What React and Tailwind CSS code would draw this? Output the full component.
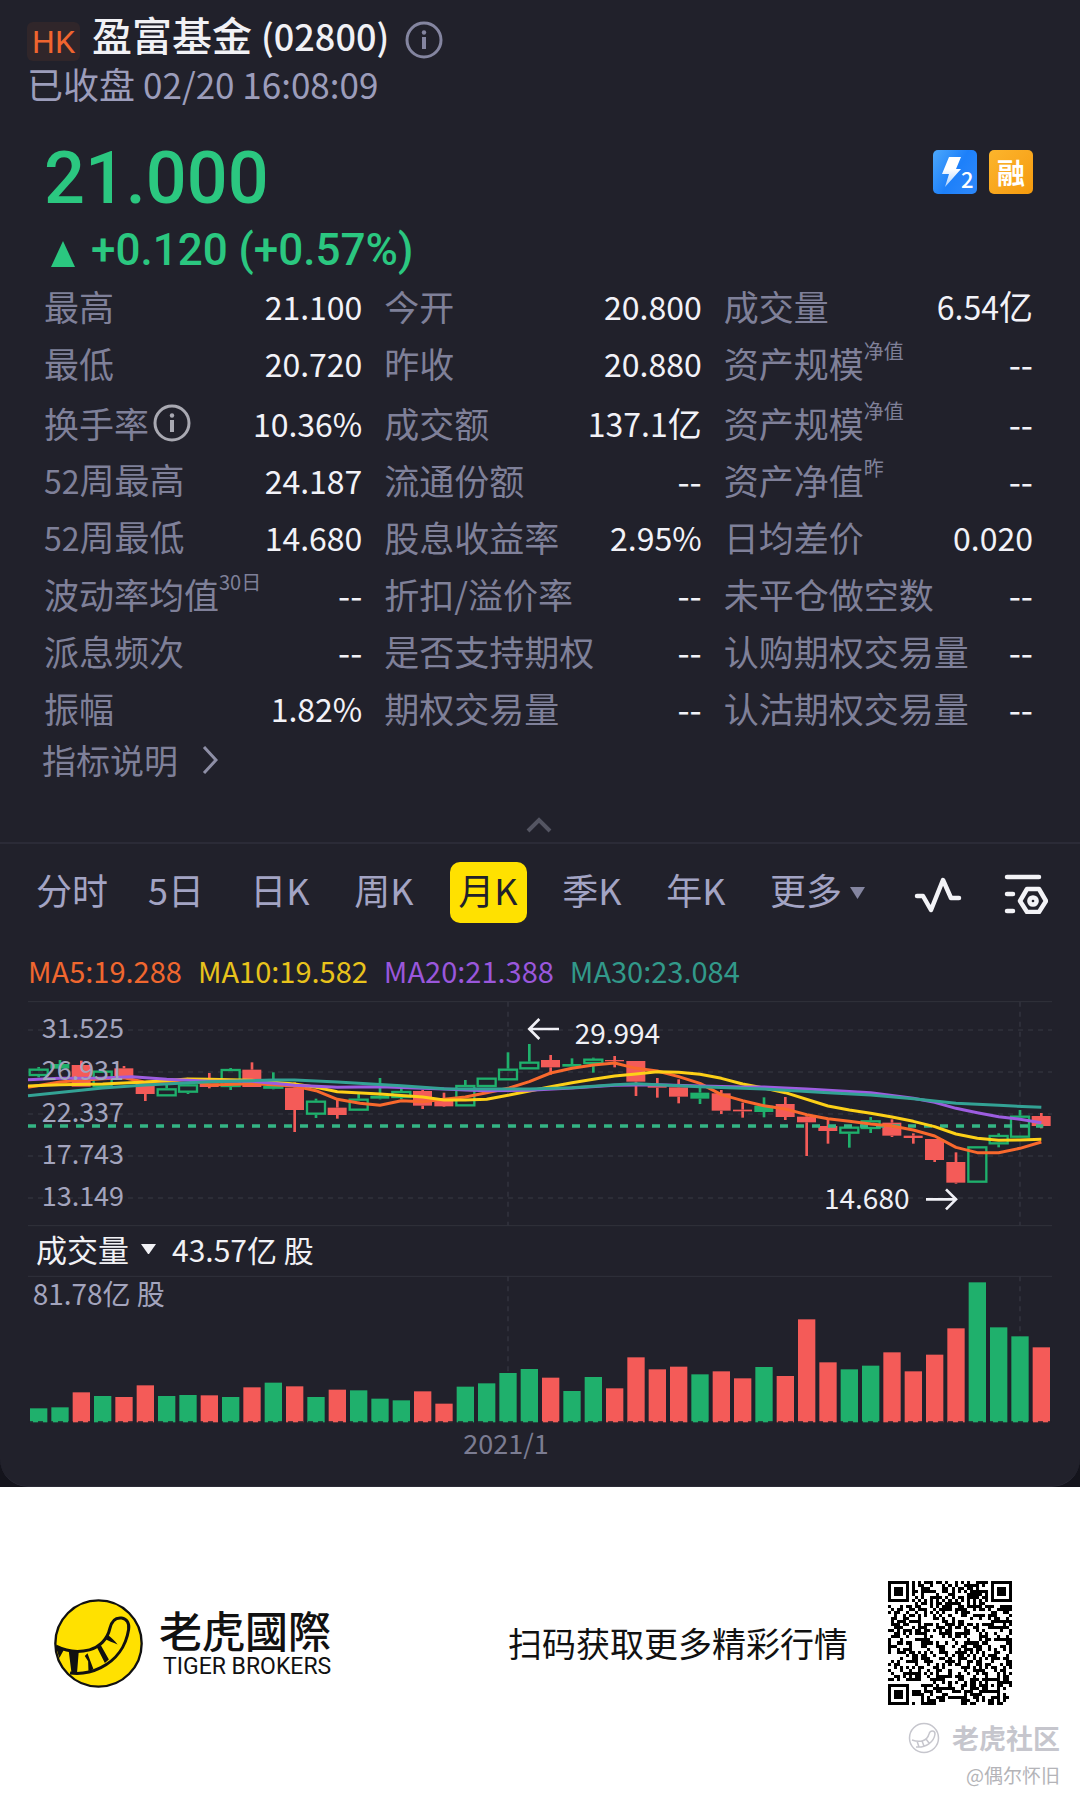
import React from "react";

const SANS = "font-['Noto_Sans_CJK_SC','Noto_Sans',sans-serif]";

const UP = "#1fb06c";
const DOWN = "#f45b58";
const PANEL = "#21212b";

const STATS = [
  [["最高", "21.100"], ["今开", "20.800"], ["成交量", "6.54", { unit: "亿" }]],
  [["最低", "20.720"], ["昨收", "20.880"], ["资产规模", "--", { sup: "净值" }]],
  [["换手率", "10.36%", { info: true }], ["成交额", "137.1", { unit: "亿" }], ["资产规模", "--", { sup: "净值" }]],
  [["52周最高", "24.187"], ["流通份额", "--"], ["资产净值", "--", { sup: "昨" }]],
  [["52周最低", "14.680"], ["股息收益率", "2.95%"], ["日均差价", "0.020"]],
  [["波动率均值", "--", { sup: "30日" }], ["折扣/溢价率", "--"], ["未平仓做空数", "--"]],
  [["派息频次", "--"], ["是否支持期权", "--"], ["认购期权交易量", "--"]],
  [["振幅", "1.82%"], ["期权交易量", "--"], ["认沽期权交易量", "--"]],
];

const TABS = ["分时", "5日", "日K", "周K", "月K", "季K", "年K"];

// Each candle: kind (h = hollow rise, f = filled rise, d = fall), body top, body bottom, wick top, wick bottom
const CANDLES = [
  ["h", 236, 258, 231, 262], ["f", 222, 236, 210, 240], ["d", 225, 290, 212, 290], ["h", 242, 292, 240, 292],
  ["d", 235, 258, 228, 258], ["d", 275, 312, 275, 333], ["h", 295, 319, 285, 319], ["h", 283, 308, 280, 312],
  ["d", 280, 291, 249, 295], ["h", 237, 291, 234, 300], ["d", 239, 291, 217, 291], ["h", 288, 296, 247, 298],
  ["d", 293, 360, 277, 426], ["h", 332, 374, 326, 384], ["d", 353, 375, 330, 386], ["h", 326, 362, 312, 362],
  ["f", 317, 326, 264, 328], ["h", 303, 324, 296, 327], ["d", 303, 347, 300, 357], ["d", 330, 349, 308, 351],
  ["h", 285, 349, 270, 349], ["h", 263, 291, 263, 291], ["h", 236, 271, 187, 271], ["h", 215, 238, 162, 238],
  ["d", 210, 232, 195, 254], ["f", 222, 230, 205, 230], ["h", 206, 222, 203, 248], ["d", 210, 214, 198, 232],
  ["d", 213, 275, 213, 318], ["d", 288, 293, 264, 323], ["d", 292, 320, 268, 340], ["f", 308, 326, 280, 342],
  ["d", 310, 362, 300, 372], ["d", 359, 364, 338, 383], ["f", 347, 366, 322, 382], ["d", 342, 381, 321, 390],
  ["d", 380, 397, 375, 498], ["d", 408, 423, 385, 461], ["h", 410, 431, 410, 473], ["h", 391, 417, 381, 429],
  ["d", 398, 437, 388, 441], ["d", 437, 444, 430, 461], ["d", 447, 510, 447, 516], ["d", 516, 578, 487, 581],
  ["h", 469, 578, 469, 578], ["h", 435, 463, 430, 472], ["h", 377, 443, 360, 443], ["d", 378, 408, 369, 415],
];

const AVERAGES = [
  ["#f9692d", "84,292 180,276 244,271 308,266 372,263 436,277 500,275 564,268 628,285 756,281 884,288 948,302 1012,328 1080,340 1140,346 1204,332 1268,335 1332,328 1396,321 1460,308 1524,295 1588,275 1652,249 1716,235 1780,225 1844,219 1908,235 1972,243 2036,260 2100,280 2164,314 2228,332 2292,347 2356,357 2420,374 2484,386 2548,394 2612,402 2676,408 2740,420 2804,438 2868,472 2932,488 2996,488 3060,475 3124,456"],
  ["#fdd018", "84,288 180,284 308,282 436,276 564,267 628,268 756,271 884,282 948,292 1012,305 1140,312 1268,321 1332,330 1396,330 1460,328 1524,316 1588,303 1652,290 1716,278 1780,268 1844,258 1908,252 1972,245 2036,247 2100,253 2164,265 2228,282 2292,294 2356,308 2484,348 2548,360 2612,370 2676,381 2740,394 2804,410 2868,432 2932,445 2996,451 3060,450 3124,448"],
  ["#9d5de0", "84,269 180,265 308,264 396,260 500,268 628,274 756,274 884,286 1012,292 1140,290 1332,297 1396,300 1460,302 1588,301 1716,294 1844,286 1972,284 2100,288 2228,291 2292,291 2420,297 2612,308 2740,325 2804,337 2868,355 2932,368 2996,380 3060,388 3124,398"],
  ["#33a295", "84,317 308,294 436,285 628,275 756,272 820,270 884,270 1012,276 1204,287 1332,296 1460,297 1588,297 1716,293 1844,284 1908,281 2100,290 2292,297 2484,308 2612,315 2740,326 2868,340 2996,346 3124,352"],
];

const VOLUMES = [
  [414, 1], [411, 1], [366, 0], [377, 1], [380, 0], [345, 0], [377, 1], [374, 1], [375, 0], [380, 1], [351, 0], [337, 1],
  [348, 0], [380, 1], [358, 0], [360, 1], [385, 1], [390, 1], [363, 0], [400, 0], [349, 1], [339, 1], [308, 1], [296, 1],
  [322, 0], [362, 1], [320, 1], [354, 0], [261, 0], [297, 0], [289, 0], [312, 1], [303, 0], [324, 0], [290, 1], [317, 0],
  [147, 0], [276, 0], [297, 1], [286, 1], [246, 0], [303, 0], [253, 0], [174, 0], [36, 1], [171, 1], [198, 1], [231, 0],
];

const GRID = [[120, "31.525"], [246, "26.931"], [372, "22.337"], [498, "17.743"], [624, "13.149"]];

function InfoIcon({ className }) {
  return (
    <svg viewBox="0 0 38 38" className={className} fill="none" stroke="currentColor" aria-hidden="true">
      <circle cx="19" cy="19" r="17" strokeWidth="3" />
      <circle cx="19" cy="11.5" r="2.2" fill="currentColor" stroke="none" />
      <path d="M19 16v12" strokeWidth="4" />
    </svg>
  );
}

function Stat({ label, value, sup, info, unit }) {
  return (
    <div className="flex items-center justify-between">
      <dt className="flex items-center text-[35px] leading-[48px] whitespace-nowrap text-[#7f8099]">
        <span className="whitespace-nowrap">
          {label.startsWith("52") ? <><span className="text-[32px]">52</span>{label.slice(2)}</> : label}
        </span>
        {sup && <sup className="top-0 -mt-6 text-[20px] leading-none">{sup}</sup>}
        {info && (
          <button type="button" aria-label="换手率说明" className="ml-1 text-[#a9a9b2]">
            <InfoIcon className="size-[38px]" />
          </button>
        )}
      </dt>
      <dd className={`leading-[48px] whitespace-nowrap text-[#f2f2f8] ${value === "--" ? "text-[35px]" : "text-[32px]"}`}>
        {value}
        {unit && <span className="text-[34px]">{unit}</span>}
      </dd>
    </div>
  );
}

function PriceChart() {
  return (
    <svg viewBox="84 33 3072 675" className="block h-auto w-full overflow-visible" role="img" aria-label="月K线图">
      <g stroke="#31323c" strokeWidth="3" fill="none">
        <path d="M84 35H3156M84 707H3156" />
        <g strokeDasharray="15 15" strokeWidth="5">
          {GRID.map(([y]) => <path key={y} d={`M84 ${y}H3156`} />)}
          <path d="M1524 35V707M3060 35V707" />
        </g>
      </g>
      {CANDLES.map(([kind, top, bottom, high, low], i) => {
        const x = 116 + i * 64;
        const color = kind === "d" ? DOWN : UP;
        return (
          <g key={i} stroke={color} strokeWidth="8">
            {high < top && <path d={`M${x} ${high}V${top}`} />}
            {low > bottom && <path d={`M${x} ${bottom}V${low}`} />}
            {kind === "h" ? (
              <rect x={x - 27} y={top + 3} width="54" height={Math.max(bottom - top - 6, 1)} fill="none" strokeWidth="7" />
            ) : (
              <rect x={x - 29} y={top} width="57" height={bottom - top} fill={color} stroke="none" />
            )}
          </g>
        );
      })}
      <path d="M84 408H3130" stroke="#35b585" strokeWidth="10" strokeDasharray="24 24" />
      {AVERAGES.map(([color, points]) => (
        <polyline key={color} points={points} fill="none" stroke={color} strokeWidth="9" strokeLinejoin="round" />
      ))}
      <g fill="#a3a4bd" fontSize="81">
        {GRID.map(([y, text]) => <text key={text} x="125" y={y + 24}>{text}</text>)}
      </g>
      <g fill="#f0f0f6" fontSize="84">
        <text x="1724" y="161">29.994</text>
        <text x="2472" y="657">14.680</text>
      </g>
      <path
        d="M1677 117H1590M1618 87L1588 117L1618 147M2778 628H2866M2838 598L2868 628L2838 658"
        stroke="#f0f0f6" strokeWidth="8" fill="none"
      />
    </svg>
  );
}

function VolumeChart() {
  return (
    <svg viewBox="84 17 3072 552" className="block h-auto w-full overflow-visible" role="img" aria-label="成交量柱状图">
      <g stroke="#31323c" fill="none">
        <path d="M84 18H3156" strokeWidth="3" />
        <path d="M1524 18V455M3060 18V455" strokeDasharray="15 15" strokeWidth="5" />
      </g>
      {VOLUMES.map(([top, up], i) => (
        <rect key={i} x={90 + i * 64} y={top} width="52" height={456 - top} fill={up ? UP : DOWN} />
      ))}
      <path d="M84 455H3156" stroke={PANEL} strokeWidth="5" strokeDasharray="15 15" />
      <text x="98" y="104" fontSize="84" fill="#a3a4bd">81.78亿 股</text>
      <text x="1518" y="552" fontSize="81" fill="#7b7c92" textAnchor="middle">2021/1</text>
    </svg>
  );
}

function TigerLogo({ className }) {
  return (
    <svg viewBox="44 58 266 266" className={className} aria-hidden="true">
      <circle cx="177" cy="191" r="129" fill="#ffe100" stroke="#111" strokeWidth="7" />
      <path
        d="M50 199C80 214 118 218 150 210C180 202 204 178 211 146C216 124 229 113 246 115C262 117 270 131 267 149C259 200 229 241 184 263C154 278 122 283 92 279"
        fill="none" stroke="#111" strokeWidth="9"
      />
      <path
        d="M48 196L74 209L60 234ZM88 213L118 214L113 277L96 277ZM136 228L144 220L162 268L147 273L146 244ZM173 204L184 196L208 239L196 249ZM195 177L203 164C215 173 226 182 234 194C220 188 207 184 195 177Z"
        fill="#111"
      />
    </svg>
  );
}

const QR_SIZE = 41;

function buildQr() {
  let seed = 28000;
  const random = () => {
    seed = (seed * 1103515245 + 12345) % 2147483648;
    return seed / 2147483648;
  };
  const finder = (x, y) => {
    const d = Math.max(Math.abs(x - 3), Math.abs(y - 3));
    return d <= 4 ? d !== 2 && d !== 4 : null;
  };
  let path = "";
  for (let y = 0; y < QR_SIZE; y++) {
    for (let x = 0; x < QR_SIZE; x++) {
      let on = random() > 0.5;
      if (x === 6 || y === 6) on = (x + y) % 2 === 0;
      const a = Math.max(Math.abs(x - 34), Math.abs(y - 34));
      if (a <= 2) on = a !== 1;
      const f = finder(x, y) ?? finder(x - QR_SIZE + 7, y) ?? finder(x, y - QR_SIZE + 7);
      if (f !== null) on = f;
      if (on) path += `M${x} ${y}h1v1h-1z`;
    }
  }
  return path;
}

const QR_PATH = buildQr();

export default function App() {
  return (
    <div className={`w-full bg-white ${SANS}`}>
      <div className="bg-[#14141c]">
        <main className="rounded-b-[28px] border-b border-[#2b2b36] bg-[#21212b] pb-[26px]">
          <header className="pt-3 pl-[27px]">
            <div className="flex h-12 items-start">
              <span className="mt-[10px] flex h-[39px] w-[53px] items-center justify-center rounded-md bg-[#30262a] font-[Roboto,sans-serif] text-[32px] leading-none text-[#f0652f]">HK</span>
              <h1 className="ml-3 text-[40px] leading-[44px] font-medium whitespace-nowrap text-[#f1f1f5]">
                盈富基金 <span className="text-[36px]">(02800)</span>
              </h1>
              <button type="button" aria-label="标的信息" className="mt-[9px] ml-4 text-[#8485a0]">
                <InfoIcon className="size-[38px]" />
              </button>
            </div>
            <p className="text-[36px] leading-[46px] text-[#9c9dbb]">
              已收盘 <span className="text-[35px]">02/20 16:08:09</span>
            </p>
          </header>

          <section className="mt-7 pr-[47px] pl-11">
            <div className="flex items-start justify-between">
              <p className="font-[Roboto,sans-serif] text-[72px] leading-[88px] font-medium text-[#2bc780]">21.000</p>
              <div className="mt-[15px] flex gap-3">
                <svg viewBox="0 0 44 44" className="size-11" role="img" aria-label="Level 2">
                  <defs>
                    <linearGradient id="lv2" x1="0" y1="0" x2="1" y2="0.6">
                      <stop offset="0" stopColor="#4da8fb" />
                      <stop offset="0.6" stopColor="#1d80fa" />
                      <stop offset="1" stopColor="#2a86fa" />
                    </linearGradient>
                    <linearGradient id="bolt" x1="0" y1="0" x2="0" y2="1">
                      <stop offset="0.4" stopColor="#fff" />
                      <stop offset="1" stopColor="#a9cffd" />
                    </linearGradient>
                  </defs>
                  <rect width="44" height="44" rx="5" fill="url(#lv2)" />
                  <path d="M16 7h12l-5 12h5L12 37l4-13H9z" fill="url(#bolt)" />
                  <text x="28" y="38" fontSize="22" fontWeight="500" fill="#fff">2</text>
                </svg>
                <span className="flex size-11 items-center justify-center rounded-[5px] bg-linear-to-br from-[#fcb52c] to-[#f59a0b] text-[28px] leading-none font-bold text-white">融</span>
              </div>
            </div>
            <p className="flex h-[54px] items-center font-[Roboto,sans-serif] text-[44px] leading-[52px] font-medium text-[#2bc780]">
              <svg viewBox="0 0 24 26" className="mt-2 mr-4 ml-[7px] h-[26px] w-6" aria-hidden="true">
                <path d="M12 0L24 26H0z" fill="currentColor" />
              </svg>
              +0.120 (+0.57%)
            </p>

            <dl>
              {STATS.map((row, i) => (
                <div
                  key={i}
                  className={`grid grid-cols-[318fr_317fr_309fr] gap-[22px] ${i === 2 ? "h-[60px] pt-1" : "h-[57px]"}`}
                >
                  {row.map(([label, value, extra], j) => (
                    <Stat key={j} label={label} value={value} {...extra} />
                  ))}
                </div>
              ))}
            </dl>
            <button type="button" className="-ml-0.5 flex h-12 items-center gap-6 text-[34px] leading-[48px] text-[#7f8099]">
              指标说明
              <svg viewBox="0 0 16 28" className="h-7 w-4" fill="none" stroke="#8e8fa6" strokeWidth="3" aria-hidden="true">
                <path d="M2 1l12 13L2 27" />
              </svg>
            </button>
            <div className="flex justify-center pt-8 pb-2">
              <button type="button" aria-label="收起">
                <svg viewBox="0 0 26 18" className="h-[18px] w-[26px]" fill="none" stroke="#545562" strokeWidth="4" aria-hidden="true">
                  <path d="M2 15L13 4l11 11" />
                </svg>
              </button>
            </div>
          </section>

          <nav className="flex h-[98px] items-center border-t-2 border-[#2b2b37] pr-8 pl-5 text-[36px] leading-[54px] text-[#a3a4c4]">
            {TABS.map((tab) => (
              <div key={tab} className="flex w-[104px] justify-center">
                <button
                  type="button"
                  className={
                    tab === "月K"
                      ? "h-[61px] w-[77px] rounded-[10px] bg-[#ffe100] pb-[7px] whitespace-nowrap text-[#21212b]"
                      : "h-[61px] pb-[7px] whitespace-nowrap"
                  }
                >
                  {tab}
                </button>
              </div>
            ))}
            <button type="button" className="ml-[22px] flex h-[61px] items-center gap-2 pb-[7px] whitespace-nowrap">
              更多
              <svg viewBox="0 0 15 12" className="mt-2 h-3 w-[15px]" aria-hidden="true">
                <path d="M0 0h15L7.500 12z" fill="#8485a0" />
              </svg>
            </button>
            <div className="mt-1 ml-auto flex items-center gap-[42px] text-[#f3f3f7]">
              <button type="button" aria-label="画线">
                <svg viewBox="0 0 48 40" className="h-10 w-12" fill="none" stroke="currentColor" strokeWidth="4.500" strokeLinecap="round" strokeLinejoin="round" aria-hidden="true">
                  <path d="M3 22h6l8 14L29 6l8 18h8" />
                </svg>
              </button>
              <button type="button" aria-label="图表设置">
                <svg viewBox="0 0 44 40" className="h-10 w-11" fill="none" stroke="currentColor" strokeWidth="4.500" strokeLinecap="round" strokeLinejoin="round" aria-hidden="true">
                  <path d="M3 3h32M3 20h6M3 37h6" />
                  <path d="M23 15h12l7 12-7 11H23l-7-11z" />
                  <circle cx="29" cy="27" r="3.600" />
                </svg>
              </button>
            </div>
          </nav>

          <section className="px-7">
            <div className="flex gap-4 pt-2 pb-[9px] text-[29px] leading-[44px]">
              <span className="text-[#f0672f]">MA5:19.288</span>
              <span className="text-[#e8c31c]">MA10:19.582</span>
              <span className="text-[#9a57dc]">MA20:21.388</span>
              <span className="text-[#32998a]">MA30:23.084</span>
            </div>
            <PriceChart />
            <div className="flex h-[50px] items-center pb-1 pl-2 leading-[46px] text-[#f1f1f5]">
              <button type="button" className="flex items-center gap-3 text-[31px]">
                成交量
                <svg viewBox="0 0 15 10" className="h-2.5 w-[15px]" aria-hidden="true">
                  <path d="M0 0h15L8 10H7z" fill="currentColor" />
                </svg>
              </button>
              <span className="ml-4 text-[30px]">43.57亿 股</span>
            </div>
            <VolumeChart />
          </section>
        </main>
      </div>

      <footer className="pt-[94px] pr-5 pl-[54px] text-[#111]">
        <div className="flex items-center pr-12">
          <TigerLogo className="size-[89px]" />
          <div className="ml-4">
            <p className="font-['Noto_Sans_CJK_TC',sans-serif] text-[43px] leading-[46px] font-medium">老虎國際</p>
            <p className="pt-0.5 pl-1 font-[Roboto,sans-serif] text-[23px] leading-[26px]">TIGER BROKERS</p>
          </div>
          <p className="mr-10 ml-auto text-[34px] leading-[48px]">扫码获取更多精彩行情</p>
          <svg viewBox="0 0 41 41" className="size-[124px]" role="img" aria-label="二维码" shapeRendering="crispEdges">
            <path d={QR_PATH} fill="#000" />
          </svg>
        </div>
        <div className="mt-3 flex flex-col items-end">
          <div className="flex items-center gap-3 text-[#c6c6cd]">
            <svg viewBox="0 0 32 32" className="size-8" fill="none" stroke="currentColor" strokeWidth="1.500" aria-hidden="true">
              <circle cx="16" cy="16" r="14.500" />
              <path d="M4 18c8 3 15 1 17-6 1-4 6-4 6 0-1 8-9 14-19 13M9 19l2 6M14 19l2 5M18 17l3 4" />
            </svg>
            <span className="text-[27px] leading-[42px] font-bold">老虎社区</span>
          </div>
          <span className="text-[19px] leading-[32px] text-[#b4b4b8]">@偶尔怀旧</span>
        </div>
      </footer>
    </div>
  );
}
